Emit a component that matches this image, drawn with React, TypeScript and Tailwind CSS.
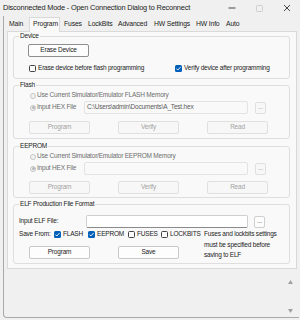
import React from 'react';

const Check = ({ checked }: { checked?: boolean }) =>
  checked ? (
    <span className="w-[7px] h-[7px] shrink-0 rounded-[1.5px] bg-[#005fb8] flex items-center justify-center">
      <svg width="7" height="7" viewBox="0 0 7 7">
        <path d="M1.4 3.6 L2.8 5 L5.6 2" fill="none" stroke="#fff" strokeWidth="0.9" />
      </svg>
    </span>
  ) : (
    <span className="w-[7px] h-[7px] shrink-0 rounded-[1.5px] border border-[#444] bg-[#fbfbfb]" />
  );

const Radio = ({ selected }: { selected?: boolean }) => (
  <span className="w-[6px] h-[6px] shrink-0 rounded-full border border-[#c4c4c4] bg-[#f3f3f3] flex items-center justify-center">
    {selected && <span className="w-[3px] h-[3px] rounded-full bg-[#b8b8b8]" />}
  </span>
);

const Btn = ({ label, enabled, strong }: { label: string; enabled?: boolean; strong?: boolean }) => (
  <div
    className={
      'w-[61px] h-[13px] rounded-[2px] border flex items-center justify-center ' +
      (enabled
        ? strong
          ? 'border-[#8e8e8e] bg-[#fdfdfd] text-[#1b1b1b]'
          : 'border-[#c9c9c9] bg-[#fdfdfd] text-[#1b1b1b]'
        : 'border-[#e0e0e0] bg-[#f7f7f7] text-[#a3a3a3]')
    }
  >
    {label}
  </div>
);

const Dots = ({ enabled }: { enabled?: boolean }) => (
  <div
    className={
      'w-[11px] h-[12px] rounded-[2px] border flex items-center justify-center pb-[1px] ' +
      (enabled ? 'border-[#cfcfcf] bg-[#fdfdfd] text-[#555]' : 'border-[#e0e0e0] bg-[#f7f7f7] text-[#a3a3a3]')
    }
  >
    ...
  </div>
);

const Legend = ({ children }: { children: React.ReactNode }) => (
  <legend className="ml-[5px] px-[1px] leading-[8px] text-[#1b1b1b]">{children}</legend>
);

const MemoryGroup = ({ title, memory, path, gap }: { title: string; memory: string; path: string; gap: string }) => (
  <>
    <Legend>{title}</Legend>
    <div className="mt-[2px] h-[9px] flex items-center pl-[16px] text-[#6d6d6d]">
      <Radio />
      <span className="ml-[1px]">Use Current Simulator/Emulator {memory} Memory</span>
    </div>
    <div className="mt-[1px] h-[13px] flex items-center pl-[16px] text-[#6d6d6d]">
      <div className="w-[54px] flex items-center">
        <Radio selected />
        <span className="ml-[1px]">Input HEX File</span>
      </div>
      <div className="w-[164px] h-[13px] border border-[#e3e3e3] bg-[#f9f9f9] rounded-[2px] flex items-center pl-[2px] text-[#5a5a5a]">
        {path}
      </div>
      <div className="ml-[7px]">
        <Dots />
      </div>
    </div>
    <div className={'flex pl-[15px] gap-[28px] ' + gap}>
      <Btn label="Program" />
      <Btn label="Verify" />
      <Btn label="Read" />
    </div>
  </>
);

const tabs: [string, string][] = [
  ['Main', 'w-[24px] ml-[1px]'],
  ['Program', 'w-[31px]'],
  ['Fuses', 'w-[24px]'],
  ['LockBits', 'w-[30px]'],
  ['Advanced', 'w-[36px]'],
  ['HW Settings', 'w-[42px]'],
  ['HW Info', 'w-[30px]'],
  ['Auto', 'w-[22px]'],
];

export default function App() {
  return (
    <div className="w-[300px] h-[320px] bg-[#f0f0f0] text-[#1b1b1b] font-['Liberation_Sans',Arial,sans-serif] text-[6.5px] leading-none tracking-[-0.2px] overflow-hidden whitespace-nowrap">
      {/* title bar */}
      <div className="h-[16px] flex items-center">
        <span className="pl-[3px] text-[7.4px]">Disconnected Mode - Open Connection Dialog to Reconnect</span>
        <div className="ml-auto flex items-center pr-[9px]">
          <svg width="8" height="8" viewBox="0 0 8 8" className="mr-[20px]">
            <path d="M0.5 4 H7.5" stroke="#333" strokeWidth="0.9" />
          </svg>
          <svg width="7" height="7" viewBox="0 0 7 7" className="mr-[20px]">
            <rect x="0.5" y="0.5" width="6" height="6" rx="1" fill="none" stroke="#c8c8c8" strokeWidth="0.8" />
          </svg>
          <svg width="8" height="8" viewBox="0 0 8 8">
            <path d="M1 1 L7 7 M7 1 L1 7" stroke="#333" strokeWidth="0.9" />
          </svg>
        </div>
      </div>

      <div className="h-[302px] ml-[3px] mr-[1px] border-l border-b border-[#a9a9a9] rounded-bl-[4px] flex flex-col">
        {/* tabs */}
        <div className="h-[15px] flex items-end shrink-0 text-[6.8px] tracking-[-0.15px]">
          {tabs.map(([label, w]) =>
            label === 'Program' ? (
              <div
                key={label}
                className={w + ' h-[15px] -mb-[1px] relative z-10 border border-b-0 border-[#d9d9d9] bg-[#f9f9f9] flex items-center pl-[3px] pb-[1px]'}
              >
                {label}
              </div>
            ) : (
              <div key={label} className={w + ' h-[13px] flex items-center pl-[4px]'}>
                {label}
              </div>
            )
          )}
        </div>

        {/* panel */}
        <div className="ml-[3px] w-[290px] h-[238px] shrink-0 border border-[#d9d9d9] bg-[#f9f9f9] pl-[5px]">
          <fieldset className="w-[277px] h-[47px] border border-[#dedede] rounded-[3px]">
            <Legend>Device</Legend>
            <div className="mt-[4px] ml-[14px]">
              <Btn label="Erase Device" enabled strong />
            </div>
            <div className="mt-[7px] h-[9px] flex items-center">
              <div className="w-[161px] pl-[15px] flex items-center">
                <Check />
                <span className="ml-[2px]">Erase device before flash programming</span>
              </div>
              <Check checked />
              <span className="ml-[2px]">Verify device after programming</span>
            </div>
          </fieldset>

          <fieldset className="mt-[2px] w-[277px] h-[58px] border border-[#dedede] rounded-[3px]">
            <MemoryGroup title="Flash" memory="FLASH" path="C:\Users\admin\Documents\A_Test.hex" gap="mt-[7px]" />
          </fieldset>

          <fieldset className="mt-[3px] w-[277px] h-[56px] border border-[#dedede] rounded-[3px]">
            <MemoryGroup title="EEPROM" memory="EEPROM" path="" gap="mt-[6px]" />
          </fieldset>

          <fieldset className="mt-[2px] w-[277px] h-[64px] border border-[#dedede] rounded-[3px]">
            <Legend>ELF Production File Format</Legend>
            <div className="mt-[7px] h-[13px] flex items-center">
              <span className="w-[72px] pl-[5px]">Input ELF File:</span>
              <div className="w-[162px] h-[13px] border border-[#cfcfcf] border-b-[#8a8a8a] bg-white rounded-[2px]" />
              <div className="ml-[6px]">
                <Dots enabled />
              </div>
            </div>
            <div className="flex">
              <div className="w-[190px]">
                <div className="mt-[1px] h-[10px] flex items-center">
                  <span className="w-[40px] pl-[5px]">Save From:</span>
                  <div className="w-[34px] flex items-center">
                    <Check checked />
                    <span className="ml-[2px]">FLASH</span>
                  </div>
                  <div className="w-[40px] flex items-center">
                    <Check checked />
                    <span className="ml-[2px]">EEPROM</span>
                  </div>
                  <div className="w-[33px] flex items-center">
                    <Check />
                    <span className="ml-[2px]">FUSES</span>
                  </div>
                  <div className="flex items-center">
                    <Check />
                    <span className="ml-[2px]">LOCKBITS</span>
                  </div>
                </div>
                <div className="mt-[7px] flex pl-[15px] gap-[28px]">
                  <Btn label="Program" enabled />
                  <Btn label="Save" enabled />
                </div>
              </div>
              <div className="mt-[1px] leading-[10.5px]">
                Fuses and lockbits settings
                <br />
                must be specified before
                <br />
                saving to ELF
              </div>
            </div>
          </fieldset>
        </div>

        {/* output area with scrollbar */}
        <div className="flex-1 flex">
          <div className="ml-auto mr-[4px] w-[10px] flex flex-col items-center justify-between pt-[11px] pb-[4px]">
            <svg width="5" height="4" viewBox="0 0 5 4">
              <path d="M0 4 L2.5 0 L5 4 Z" fill="#a0a0a0" />
            </svg>
            <svg width="5" height="4" viewBox="0 0 5 4">
              <path d="M0 0 L2.5 4 L5 0 Z" fill="#a0a0a0" />
            </svg>
          </div>
        </div>
      </div>
    </div>
  );
}
